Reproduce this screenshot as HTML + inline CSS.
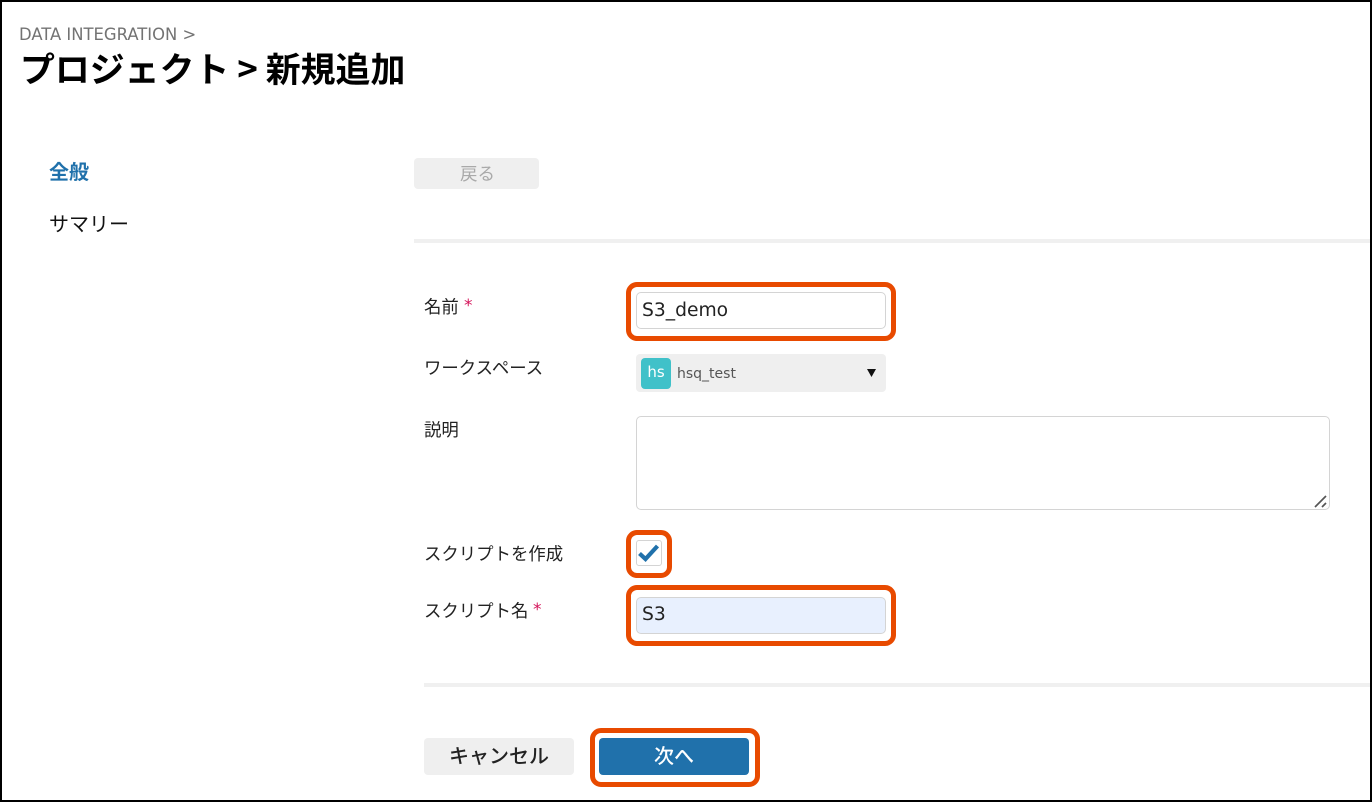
<!DOCTYPE html>
<html lang="ja"><head><meta charset="utf-8"><title>新規追加</title>
<style>
html,body{margin:0;padding:0;background:#fff}
body{position:relative;width:1372px;height:802px;overflow:hidden;font-family:"Liberation Sans","Noto Sans CJK JP",sans-serif;color:#222}
div,span.a{position:absolute;box-sizing:border-box}
.t{white-space:nowrap;line-height:1}
.cjk{font-family:"Noto Sans CJK JP",sans-serif}
.dv{font-family:"DejaVu Sans",sans-serif}
.box{border-radius:4px}
.or{border:5px solid #e84a00;border-radius:11px}
.lab{font-size:17.400px;color:#222;font-family:"Noto Sans CJK JP",sans-serif}
.inp{border:1.500px solid #d4d4d4;border-radius:5px;background:#fff}
.star{font-family:"DejaVu Sans",sans-serif;font-size:17px;color:#d4145a}
</style></head><body>
<div style="left:0;top:0;width:1372px;height:802px;border:2px solid #000;z-index:9"></div>

<div class="t dv" style="left:19px;top:27px;font-size:16.400px;color:#737373">DATA INTEGRATION &gt;</div>
<div class="t cjk" style="left:20px;top:51px;font-size:34.900px;font-weight:700;color:#000">プロジェクト &gt; 新規追加</div>

<div class="t cjk" style="left:49px;top:161px;font-size:20px;font-weight:700;color:#2071ab">全般</div>
<div class="t cjk" style="left:49px;top:213px;font-size:20px;color:#111">サマリー</div>

<div class="box" style="left:414px;top:158px;width:125px;height:31px;background:#efefef"></div>
<div class="t cjk" style="left:460px;top:165px;font-size:17.500px;color:#a9a9a9">戻る</div>
<div style="left:414px;top:239px;width:956px;height:4px;background:#f0f0f0"></div>

<div class="t lab" style="left:424px;top:298px">名前</div>
<div class="t star" style="left:464px;top:298px">*</div>
<div class="or" style="left:626px;top:282px;width:270px;height:59px"></div>
<div class="inp" style="left:636px;top:292px;width:250px;height:37px"></div>
<div class="t dv" style="left:642px;top:302px;font-size:18.700px;color:#222">S3_demo</div>

<div class="t lab" style="left:424px;top:359px">ワークスペース</div>
<div class="box" style="left:636px;top:354px;width:250px;height:38px;background:#efefef"></div>
<div class="box t dv" style="left:641px;top:358px;width:30px;height:31px;background:#40c1c9;color:#fff;font-size:15px;line-height:29px;text-align:center">hs</div>
<div class="t dv" style="left:677px;top:367px;font-size:14px;color:#555">hsq_test</div>
<svg style="position:absolute;left:866px;top:368px" width="11" height="10"><path d="M1 1H10L5.500 9Z" fill="#111"/></svg>

<div class="t lab" style="left:424px;top:421px">説明</div>
<div class="inp" style="left:636px;top:416px;width:694px;height:94px"></div>
<svg style="position:absolute;left:1312px;top:493px" width="16" height="16"><path d="M3 14L14 3M10 14L14 10" stroke="#555" stroke-width="1.700" fill="none"/></svg>

<div class="t lab" style="left:424px;top:545px">スクリプトを作成</div>
<div class="or" style="left:626px;top:530px;width:46px;height:48px"></div>
<div style="left:636px;top:540px;width:26px;height:26px;border:1.500px solid #d4d4d4;border-radius:3px;background:#fff"></div>
<svg style="position:absolute;left:636px;top:540px" width="26" height="26"><path d="M3.500 13.500L9.500 19L21.500 6" stroke="#2071ab" stroke-width="4.200" fill="none"/></svg>

<div class="t lab" style="left:424px;top:602px">スクリプト名</div>
<div class="t star" style="left:533px;top:602px">*</div>
<div class="or" style="left:626px;top:585px;width:270px;height:61px"></div>
<div class="inp" style="left:636px;top:597px;width:250px;height:37px;background:#e8f0fe"></div>
<div class="t dv" style="left:642px;top:606px;font-size:18.700px;color:#222">S3</div>

<div style="left:424px;top:683px;width:946px;height:4px;background:#f0f0f0"></div>

<div class="box" style="left:424px;top:738px;width:150px;height:37px;background:#efefef"></div>
<div class="t cjk" style="left:424px;top:745px;width:150px;text-align:center;font-size:20px;font-weight:500;color:#222">キャンセル</div>
<div class="or" style="left:590px;top:728px;width:170px;height:59px"></div>
<div class="box" style="left:599px;top:738px;width:150px;height:37px;background:#2071ab"></div>
<div class="t cjk" style="left:599px;top:745px;width:150px;text-align:center;font-size:20px;font-weight:500;color:#fff">次へ</div>
</body></html>
